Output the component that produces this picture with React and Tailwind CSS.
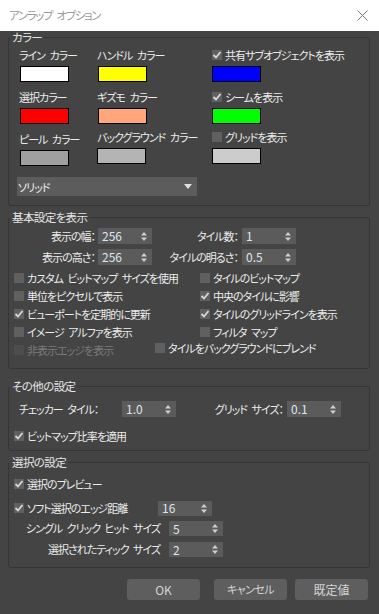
import React from "react";

const FONT = "font-['Noto_Sans_CJK_JP','Noto_Sans',sans-serif] [font-feature-settings:'palt']";
const S = "\u2002";

function Check({ checked, disabled }) {
  return (
    <span
      className={`relative inline-flex shrink-0 w-[10px] h-[10px] ${
        disabled ? "bg-[#4d4d4d]" : "bg-[#606060]"
      }`}
    >
      {checked && (
        <svg width="10" height="10" viewBox="0 0 10 10" className="absolute left-0 top-0">
          <path d="M1.5 5 L4 7.5 L8.5 2" fill="none" stroke="#d8d8d8" strokeWidth="1.8" />
        </svg>
      )}
    </span>
  );
}

function CB({ label, checked, disabled, className = "" }) {
  return (
    <div className={`flex items-center gap-[3px] h-[18px] ${className}`}>
      <Check checked={checked} disabled={disabled} />
      <span className={`leading-[14px] whitespace-nowrap ${disabled ? "text-[#7a7a7a]" : "text-[#ececec]"}`}>
        {label}
      </span>
    </div>
  );
}

function Spinner({ value, h = "h-[16px]" }) {
  return (
    <div className={`${h} w-[54px] bg-[#5b5b5b] flex items-center justify-between pl-[4px] pr-[5px] shrink-0 tracking-normal`}>
      <span className="text-[#dfe6ee] text-[12px] leading-[14px]">{value}</span>
      <svg width="6" height="9" viewBox="0 0 6 9">
        <path d="M3 0 L6 3.5 L0 3.5 Z" fill="#cfcfcf" />
        <path d="M3 9 L6 5.5 L0 5.5 Z" fill="#cfcfcf" />
      </svg>
    </div>
  );
}

function Swatch({ color, className = "" }) {
  return <div className={`w-[49px] h-[16px] border border-black ${color} ${className}`} />;
}

function Group({ title, className = "", children }) {
  return (
    <fieldset className={`ml-[8px] w-[362px] border border-[#363636] rounded-[3px] ${className}`}>
      <legend className="ml-[1px] px-[2px] h-[12px] leading-[12px] text-[11.5px] tracking-[-0.6px] text-[#e4e4e4]">{title}</legend>
      {children}
    </fieldset>
  );
}

function ColorCell({ label, color, shift = true }) {
  return (
    <div className="flex flex-col">
      <div className="h-[14px] leading-[14px] text-[#ececec] whitespace-nowrap">{label}</div>
      <Swatch color={color} className={`mt-[4px] ${shift ? "ml-[1px]" : ""}`} />
    </div>
  );
}

function CheckCell({ label, checked, color }) {
  return (
    <div className="flex flex-col">
      <div className="h-[14px] flex items-center gap-[3px]">
        <Check checked={checked} />
        <span className="leading-[14px] text-[#ececec] whitespace-nowrap">{label}</span>
      </div>
      <Swatch color={color} className="mt-[4px]" />
    </div>
  );
}

export default function App() {
  return (
    <div className={`w-[379px] h-[614px] bg-[#444444] flex flex-col overflow-hidden text-[11px] tracking-[-1px] ${FONT}`}>
      {/* title bar */}
      <div className="h-[31px] bg-white flex items-center justify-between pl-[9px] pr-[11px] shrink-0">
        <span className="text-[11.5px] tracking-[-1.4px] text-[#9a9a9a]">{`アンラップ${S}オプション`}</span>
        <svg width="11" height="11" viewBox="0 0 11 11">
          <path d="M0.5 0.5 L10.5 10.5 M10.5 0.5 L0.5 10.5" stroke="#777" strokeWidth="1" />
        </svg>
      </div>

      {/* カラー */}
      <Group title="カラー">
        <div className="pt-[5px] pl-[10px] grid grid-cols-[78px_115px_1fr] gap-y-[8px]">
          <ColorCell label={`ライン${S}カラー`} color="bg-white" />
          <ColorCell label={`ハンドル${S}カラー`} color="bg-[#ffff00]" />
          <CheckCell label="共有サブオブジェクトを表示" checked color="bg-[#0000ff]" />
          <ColorCell label="選択カラー" color="bg-[#ff0000]" />
          <ColorCell label={`ギズモ${S}カラー`} color="bg-[#ffa77a]" />
          <CheckCell label="シームを表示" checked color="bg-[#00ff00]" />
          <ColorCell label={`ピール${S}カラー`} color="bg-[#a0a0a0]" />
          <div className="flex flex-col -mt-[2px]">
            <div className="h-[14px] leading-[14px] text-[#ececec] whitespace-nowrap">{`バックグラウンド${S}カラー`}</div>
            <Swatch color="bg-[#b4b4b4]" className="mt-[4px]" />
          </div>
          <div className="-mt-[2px]">
            <CheckCell label="グリッドを表示" color="bg-[#cccccc]" />
          </div>
        </div>
        <div className="ml-[8px] mt-[11px] mb-[9px] w-[180px] h-[19px] bg-[#5c5c5c] flex items-center justify-between pl-[1px] pr-[5px]">
          <span className="text-[#ececec] leading-[14px]">ソリッド</span>
          <svg width="8" height="6" viewBox="0 0 8 6">
            <path d="M0 0 L8 0 L4 5 Z" fill="#e0e0e0" />
          </svg>
        </div>
      </Group>

      {/* 基本設定を表示 */}
      <Group title="基本設定を表示" className="mt-[5px]">
        <div className="pt-[5px] flex flex-col">
          <div className="flex items-center h-[16px]">
            <div className="w-[86px] text-right text-[#ececec] whitespace-nowrap">表示の幅：</div>
            <div className="ml-[3px]"><Spinner value="256" /></div>
            <div className="w-[86px] text-right text-[#ececec] whitespace-nowrap">タイル数：</div>
            <div className="ml-[4px]"><Spinner value="1" /></div>
          </div>
          <div className="flex items-center h-[16px] mt-[5px]">
            <div className="w-[86px] text-right text-[#ececec] whitespace-nowrap">表示の高さ：</div>
            <div className="ml-[3px]"><Spinner value="256" /></div>
            <div className="w-[86px] text-right text-[#ececec] whitespace-nowrap">タイルの明るさ：</div>
            <div className="ml-[4px]"><Spinner value="0.5" /></div>
          </div>
          <div className="mt-[4px] pl-[5px] grid grid-cols-[186px_1fr]">
            <CB label={`カスタム${S}ビットマップ${S}サイズを使用`} />
            <CB label="タイルのビットマップ" />
            <CB label="単位をピクセルで表示" />
            <CB label="中央のタイルに影響" checked />
            <CB label="ビューポートを定期的に更新" checked />
            <CB label="タイルのグリッドラインを表示" checked />
            <CB label={`イメージ${S}アルファを表示`} />
            <CB label={`フィルタ${S}マップ`} />
          </div>
          <div className="pl-[5px] flex mb-[9px]">
            <CB label="非表示エッジを表示" disabled className="w-[141px]" />
            <CB label="タイルをバックグラウンドにブレンド" className="-mt-[2px]" />
          </div>
        </div>
      </Group>

      {/* その他の設定 */}
      <Group title="その他の設定" className="mt-[11px]">
        <div className="pt-[9px] flex flex-col">
          <div className="flex items-center h-[16px] pl-[10px]">
            <div className="w-[103px] text-[#ececec] whitespace-nowrap">{`チェッカー${S}タイル：`}</div>
            <Spinner value="1.0" />
            <div className="w-[107px] text-right text-[#ececec] whitespace-nowrap">{`グリッド${S}サイズ：`}</div>
            <div className="ml-[4px]"><Spinner value="0.1" /></div>
          </div>
          <div className="mt-[10px] pl-[5px] mb-[5px]">
            <CB label="ビットマップ比率を適用" checked />
          </div>
        </div>
      </Group>

      {/* 選択の設定 */}
      <Group title="選択の設定" className="mt-[5px]">
        <div className="pt-[7px] flex flex-col">
          <div className="pl-[5px]">
            <CB label="選択のプレビュー" checked />
          </div>
          <div className="mt-[7px] pl-[5px] flex items-center h-[16px]">
            <CB label="ソフト選択のエッジ距離" checked className="w-[144px]" />
            <Spinner value="16" h="h-[15px]" />
          </div>
          <div className="mt-[5px] flex items-center h-[15px]">
            <div className="w-[151px] text-right text-[#ececec] whitespace-nowrap">{`シングル${S}クリック${S}ヒット${S}サイズ`}</div>
            <div className="ml-[9px]"><Spinner value="5" h="h-[15px]" /></div>
          </div>
          <div className="mt-[6px] mb-[10px] flex items-center h-[15px]">
            <div className="w-[151px] text-right text-[#ececec] whitespace-nowrap">{`選択されたティック${S}サイズ`}</div>
            <div className="ml-[9px]"><Spinner value="2" h="h-[15px]" /></div>
          </div>
        </div>
      </Group>

      {/* buttons */}
      <div className="mt-[11px] flex justify-end pr-[11px] tracking-normal">
        <button className="w-[73px] h-[21px] rounded-[3px] bg-[#5e5e5e] text-[#d4d4d4] text-[12px] mr-[14px]">OK</button>
        <button className="w-[73px] h-[21px] rounded-[3px] bg-[#5e5e5e] text-[#d4d4d4] text-[11px] tracking-[-0.5px] mr-[8px]">キャンセル</button>
        <button className="w-[73px] h-[21px] rounded-[3px] bg-[#5e5e5e] text-[#d4d4d4] text-[12px]">既定値</button>
      </div>
    </div>
  );
}
